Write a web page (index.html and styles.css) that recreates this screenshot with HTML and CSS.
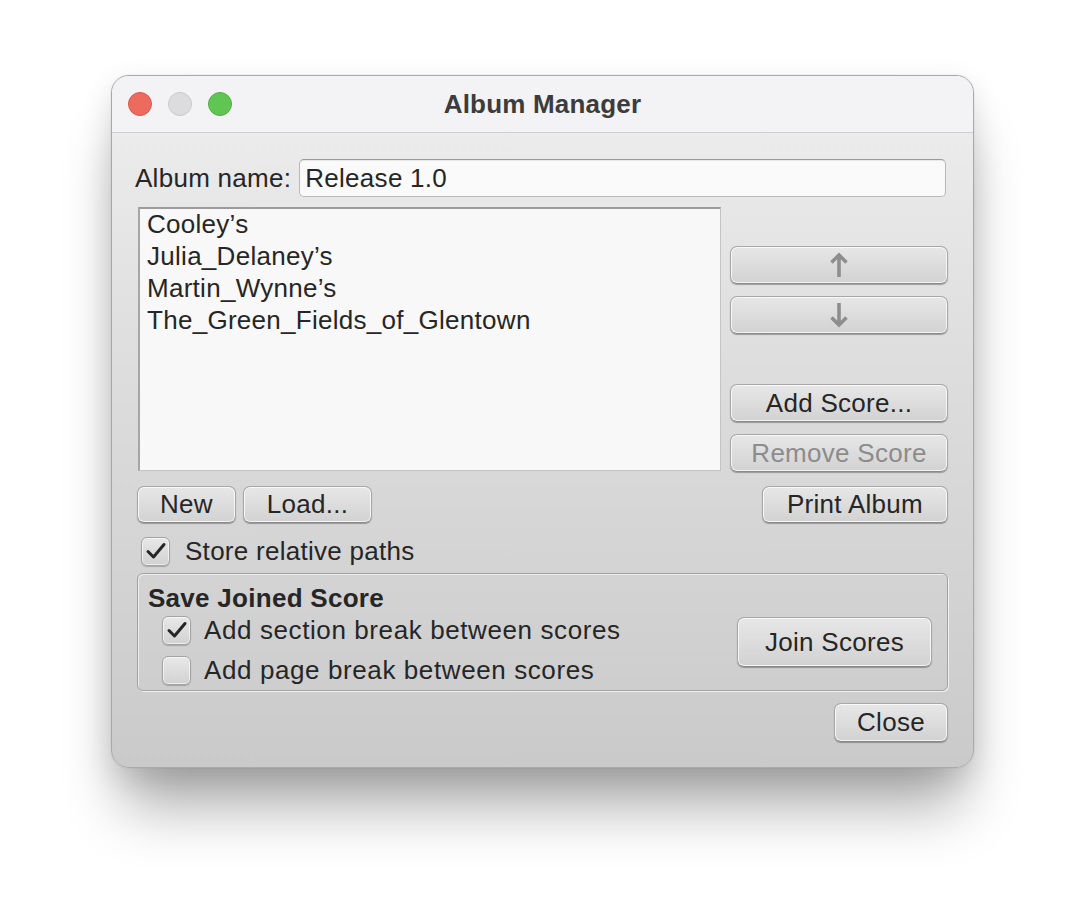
FILE: index.html
```html
<!DOCTYPE html>
<html>
<head>
<meta charset="utf-8">
<link rel="stylesheet" href="styles.css">
</head>
<body>
<div class="stage">
  <div class="window">
    <div class="titlebar">
      <div class="lights">
        <span class="light red"></span>
        <span class="light gray"></span>
        <span class="light green"></span>
      </div>
      <div class="title">Album Manager</div>
      <div></div>
    </div>
    <div class="content">
      <div class="name-row">
        <span class="label">Album name:</span>
        <div class="input">Release 1.0</div>
      </div>
      <div class="list-row">
        <div class="list">
          <div class="item">Cooley’s</div>
          <div class="item">Julia_Delaney’s</div>
          <div class="item">Martin_Wynne’s</div>
          <div class="item">The_Green_Fields_of_Glentown</div>
        </div>
        <div class="side">
          <div class="btn side-btn arrow-btn">
            <svg width="20" height="26" viewBox="0 0 20 26"><path d="M10 25V3.5M2.5 10.5L10 3L17.5 10.5" fill="none" stroke="#8e8e8e" stroke-width="3.6" stroke-linecap="butt" stroke-linejoin="miter"/></svg>
          </div>
          <div class="btn side-btn arrow-btn">
            <svg width="20" height="26" viewBox="0 0 20 26"><path d="M10 1V22.5M2.5 15.5L10 23L17.5 15.5" fill="none" stroke="#8e8e8e" stroke-width="3.6" stroke-linecap="butt" stroke-linejoin="miter"/></svg>
          </div>
          <div class="btn side-btn add-btn">Add Score...</div>
          <div class="btn side-btn disabled">Remove Score</div>
        </div>
      </div>
      <div class="btn-row">
        <div class="left-btns">
          <div class="btn new-btn">New</div>
          <div class="btn load-btn">Load...</div>
        </div>
        <div class="btn print-btn">Print Album</div>
      </div>
      <div class="check-row">
        <span class="checkbox checked">
          <svg width="22" height="20" viewBox="0 0 22 20"><path d="M3 10.5L8.5 16L19 3.5" fill="none" stroke="#262626" stroke-width="3" stroke-linecap="round" stroke-linejoin="round"/></svg>
        </span>
        <span class="check-label">Store relative paths</span>
      </div>
      <div class="group">
        <div class="group-left">
          <div class="group-title">Save Joined Score</div>
          <div class="group-check">
            <span class="checkbox checked">
              <svg width="22" height="20" viewBox="0 0 22 20"><path d="M3 10.5L8.5 16L19 3.5" fill="none" stroke="#262626" stroke-width="3" stroke-linecap="round" stroke-linejoin="round"/></svg>
            </span>
            <span class="check-label wide">Add section break between scores</span>
          </div>
          <div class="group-check">
            <span class="checkbox"></span>
            <span class="check-label wide">Add page break between scores</span>
          </div>
        </div>
        <div class="btn join-btn">Join Scores</div>
      </div>
      <div class="close-row">
        <div class="btn close-btn">Close</div>
      </div>
    </div>
  </div>
</div>
</body>
</html>
```
FILE: styles.css
```css
html, body {
  margin: 0;
  padding: 0;
  background: #ffffff;
}
body {
  font-family: "Liberation Sans", Arial, sans-serif;
  color: #262626;
  font-size: 26px;
  letter-spacing: 0.28px;
}
.stage {
  padding: 75px 0 0 111px;
  min-height: 916px;
  box-sizing: border-box;
}
.window {
  width: 863px;
  height: 693px;
  box-sizing: border-box;
  border-radius: 18px;
  overflow: hidden;
  border: 1px solid #a9a9a9;
  background: linear-gradient(#efefef 0%, #dedede 40%, #cacaca 100%);
  box-shadow: 0 50px 60px -12px rgba(0, 0, 0, 0.33), 0 10px 30px rgba(0,0,0,0.12), 0 0 1px rgba(0,0,0,0.3);
  display: flex;
  flex-direction: column;
}
.titlebar {
  height: 56px;
  flex: 0 0 56px;
  background: #f3f3f5;
  border-bottom: 1px solid #cfcfcf;
  display: grid;
  grid-template-columns: 1fr auto 1fr;
  align-items: center;
}
.lights {
  display: flex;
  gap: 16px;
  padding-left: 16px;
}
.light {
  width: 24px;
  height: 24px;
  border-radius: 50%;
  box-sizing: border-box;
}
.red { background: #ed6a5e; border: 1px solid #d9584c; }
.gray { background: #dcdcde; border: 1px solid #c8c8ca; }
.green { background: #61c554; border: 1px solid #50ad44; }
.title {
  font-weight: bold;
  font-size: 26px;
  color: #3c3c3c;
  letter-spacing: 0.2px;
}
.content {
  padding: 26px 25px 0 25px;
  display: flex;
  flex-direction: column;
}
.name-row {
  display: flex;
  align-items: center;
  gap: 8px;
  margin-left: -2px;
  margin-right: 2px;
}
.input {
  flex: 1;
  height: 38px;
  box-sizing: border-box;
  background: #fafafa;
  border: 1px solid #b9b9b9;
  border-top-color: #9a9a9a;
  border-radius: 5px;
  padding-left: 5px;
  line-height: 36px;
  color: #262626;
  box-shadow: inset 0 1px 1px rgba(0,0,0,0.08);
}
.list-row {
  display: flex;
  margin-top: 10px;
}
.list {
  margin-left: 1px;
  width: 583px;
  height: 264px;
  box-sizing: border-box;
  background: #f8f8f8;
  border: 1px solid #c4c4c4;
  border-top: 2px solid #9c9c9c;
  border-left: 2px solid #a6a6a6;
  padding: 0 0 0 7px;
}
.item {
  height: 32px;
  line-height: 31px;
}
.side {
  margin-left: 9px;
  width: 218px;
  padding-top: 39px;
  display: flex;
  flex-direction: column;
}
.btn {
  box-sizing: border-box;
  height: 38px;
  border: 1px solid #a7a7a7;
  border-bottom-color: #8a8a8a;
  border-radius: 7px;
  background: linear-gradient(#e7e7e7, #d2d2d2);
  box-shadow: inset 0 0 0 1px rgba(255,255,255,0.75), 0 1px 1px rgba(0,0,0,0.3);
  display: flex;
  align-items: center;
  justify-content: center;
  color: #262626;
  white-space: nowrap;
}
.side-btn { width: 218px; }
.arrow-btn + .arrow-btn { margin-top: 12px; }
.add-btn { margin-top: 50px; }
.disabled { margin-top: 12px; color: #8c8c8c; }
.btn-row {
  margin-top: 14px;
  display: flex;
  justify-content: space-between;
  align-items: center;
}
.left-btns {
  display: flex;
  gap: 7px;
}
.new-btn { width: 99px; height: 37px; }
.load-btn { width: 129px; height: 37px; }
.print-btn { width: 186px; height: 37px; }
.check-row {
  margin-top: 13px;
  display: flex;
  align-items: center;
  gap: 15px;
  margin-left: 4px;
  height: 30px;
  line-height: 28px;
}
.checkbox {
  width: 29px;
  height: 29px;
  box-sizing: border-box;
  border: 1px solid #a4a4a4;
  border-radius: 6px;
  background: linear-gradient(#e8e8e8, #d2d2d2);
  box-shadow: inset 0 0 0 1px rgba(255,255,255,0.6), 0 1px 1px rgba(0,0,0,0.2);
  display: flex;
  align-items: center;
  justify-content: center;
  flex: 0 0 29px;
}
.group {
  margin-top: 7px;
  height: 118px;
  box-sizing: border-box;
  border: 1px solid #a2a2a2;
  border-radius: 6px;
  box-shadow: inset 1px 1px 0 rgba(255,255,255,0.6), 1px 1px 0 rgba(255,255,255,0.7);
  display: flex;
  justify-content: space-between;
  align-items: flex-start;
  padding: 7px 15px 0 10px;
}
.group-left {
  display: flex;
  flex-direction: column;
}
.group-title {
  font-weight: bold;
  height: 34px;
  line-height: 34px;
}
.group-check {
  display: flex;
  align-items: center;
  gap: 13px;
  height: 30px;
  margin-left: 14px;
  line-height: 28px;
}
.check-label.wide { letter-spacing: 0.6px; }
.group-check + .group-check { margin-top: 10px; }
.join-btn {
  width: 195px;
  height: 50px;
  margin-top: 36px;
}
.close-row {
  margin-top: 12px;
  display: flex;
  justify-content: flex-end;
}
.close-btn { width: 114px; height: 39px; }
```
